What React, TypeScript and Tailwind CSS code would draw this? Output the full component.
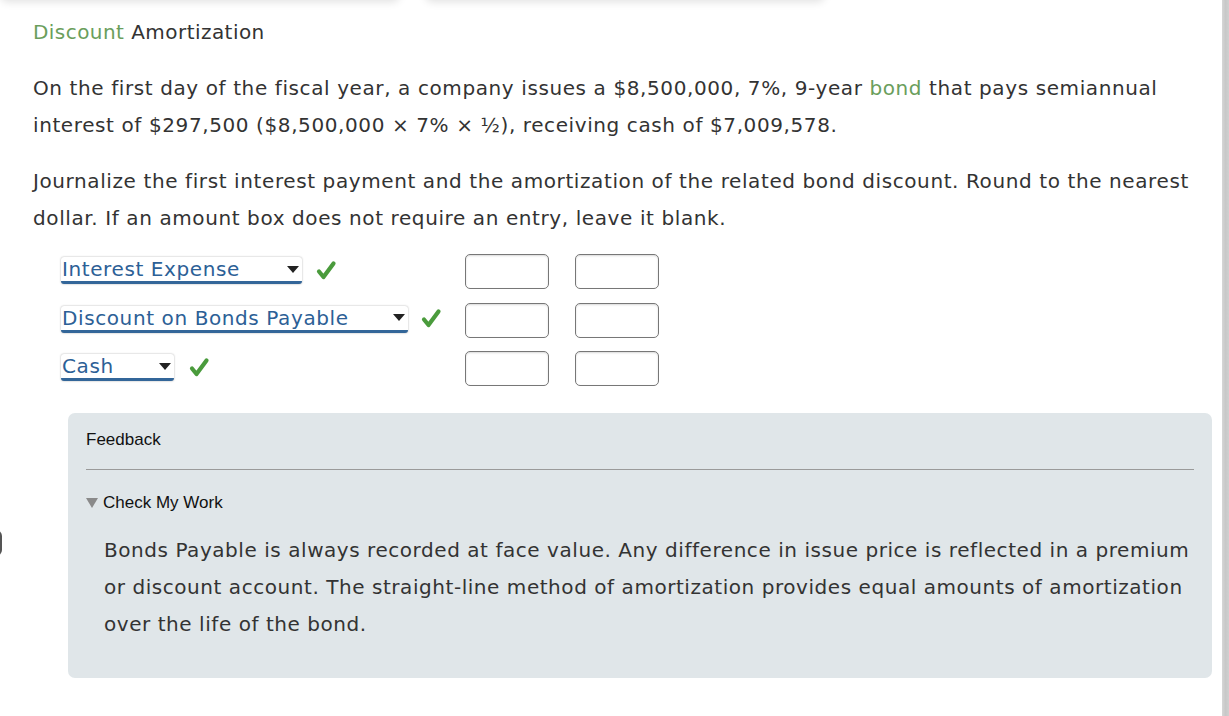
import React from "react";

const Check: React.FC = () => (
  <svg width="22" height="22" viewBox="0 0 22 22" className="shrink-0">
    <path d="M4 11.5 L8.5 17 L18.5 3.5" fill="none" stroke="#4a9b3c" strokeWidth="4.2" strokeLinecap="round" strokeLinejoin="round" />
  </svg>
);

const Dropdown: React.FC<{ label: string; width: string }> = ({ label, width }) => (
  <div className={`flex items-center justify-between bg-white rounded-[3px] shadow-[0_0_2px_rgba(0,0,0,0.35)] border-b-[3px] border-[#336699] h-[27px] ${width}`}>
    <span className="text-[#2c6096] text-[20px] leading-[24px] pl-[1px] tracking-[0.6px]">{label}</span>
    <svg width="12" height="8" viewBox="0 0 12 8" className="mr-[3px] mt-[1px]">
      <path d="M0 0 L12 0 L6 7 Z" fill="#222" />
    </svg>
  </div>
);

const AmountBox: React.FC = () => (
  <div className="w-[84px] h-[35px] rounded-[5px] border border-[#777] bg-white shadow-[inset_0_1px_2px_rgba(0,0,0,0.15)]" />
);

const rows = [
  { label: "Interest Expense", width: "w-[241px]", gap: "gap-[13px]" },
  { label: "Discount on Bonds Payable", width: "w-[347px]", gap: "gap-[12px]" },
  { label: "Cash", width: "w-[113px]", gap: "gap-[14px]" },
];

export default function App() {
  return (
    <div className="relative flex flex-col min-h-screen bg-white overflow-hidden" style={{ fontFamily: '"DejaVu Sans", Verdana, sans-serif' }}>
      {/* cards above, scrolled out of view */}
      <div className="flex gap-[25px] h-5 -mt-5">
        <div className="w-[400px] h-5 bg-white rounded-b-lg shadow-[0_2px_8px_rgba(0,0,0,0.12)]" />
        <div className="w-[400px] h-5 bg-white rounded-b-lg shadow-[0_2px_8px_rgba(0,0,0,0.12)]" />
      </div>

      <div className="absolute left-[-10px] top-[530px] w-[12px] h-[26px] rounded-full border-[2px] border-[#555]" />

      <div className="flex flex-1">
        <div className="w-[1222px] pl-[33px] pr-[10px] text-[#333] text-[20px] leading-[37px] tracking-[0.6px]">
          <h2 className="mt-[14px] text-[20px] leading-[37px] font-normal tracking-[0.45px]">
            <span className="text-[#6a9e5c]">Discount</span> Amortization
          </h2>

          <p className="mt-[19px]">
            On the first day of the fiscal year, a company issues a $8,500,000, 7%, 9-year{" "}
            <span className="text-[#6a9e5c]">bond</span> that pays semiannual interest of $297,500 ($8,500,000 × 7% × ½), receiving cash of $7,009,578.
          </p>

          <p className="mt-[19px]">
            Journalize the first interest payment and the amortization of the related bond discount. Round to the nearest dollar. If an amount box does not require an entry, leave it blank.
          </p>

          <div className="mt-[17px] ml-[28px] grid grid-cols-[404px_110px_110px] gap-y-[13.5px] items-center">
            {rows.map((r) => (
              <React.Fragment key={r.label}>
                <div className={`flex items-center ${r.gap} -mt-[2px]`}>
                  <Dropdown label={r.label} width={r.width} />
                  <Check />
                </div>
                <AmountBox />
                <AmountBox />
              </React.Fragment>
            ))}
          </div>

          <div className="mt-[27px] ml-[35px] mb-[39px] bg-[#e0e6e9] rounded-[7px] pt-[17px] pl-[18px] pr-[18px] pb-[35px] tracking-normal">
            <div className="text-[17px] leading-[20px] text-[#111]" style={{ fontFamily: '"Liberation Sans", Arial, sans-serif' }}>
              Feedback
            </div>
            <div className="mt-[19px] border-t border-[#9a9a9a]" />
            <div className="mt-[23px] flex items-center gap-[5px] text-[17px] leading-[20px] text-[#111]" style={{ fontFamily: '"Liberation Sans", Arial, sans-serif' }}>
              <svg width="12" height="10" viewBox="0 0 12 10">
                <path d="M0 0 L12 0 L6 10 Z" fill="#8a8a8a" />
              </svg>
              Check My Work
            </div>
            <p className="mt-[19px] ml-[18px] text-[#333] tracking-[0.55px]">
              Bonds Payable is always recorded at face value. Any difference in issue price is reflected in a premium or discount account. The straight-line method of amortization provides equal amounts of amortization over the life of the bond.
            </p>
          </div>
        </div>
        <div className="w-[7px] bg-gradient-to-r from-[#d6d6d6] via-[#c8c8c8] to-[#d0d0d0]" />
      </div>
    </div>
  );
}
